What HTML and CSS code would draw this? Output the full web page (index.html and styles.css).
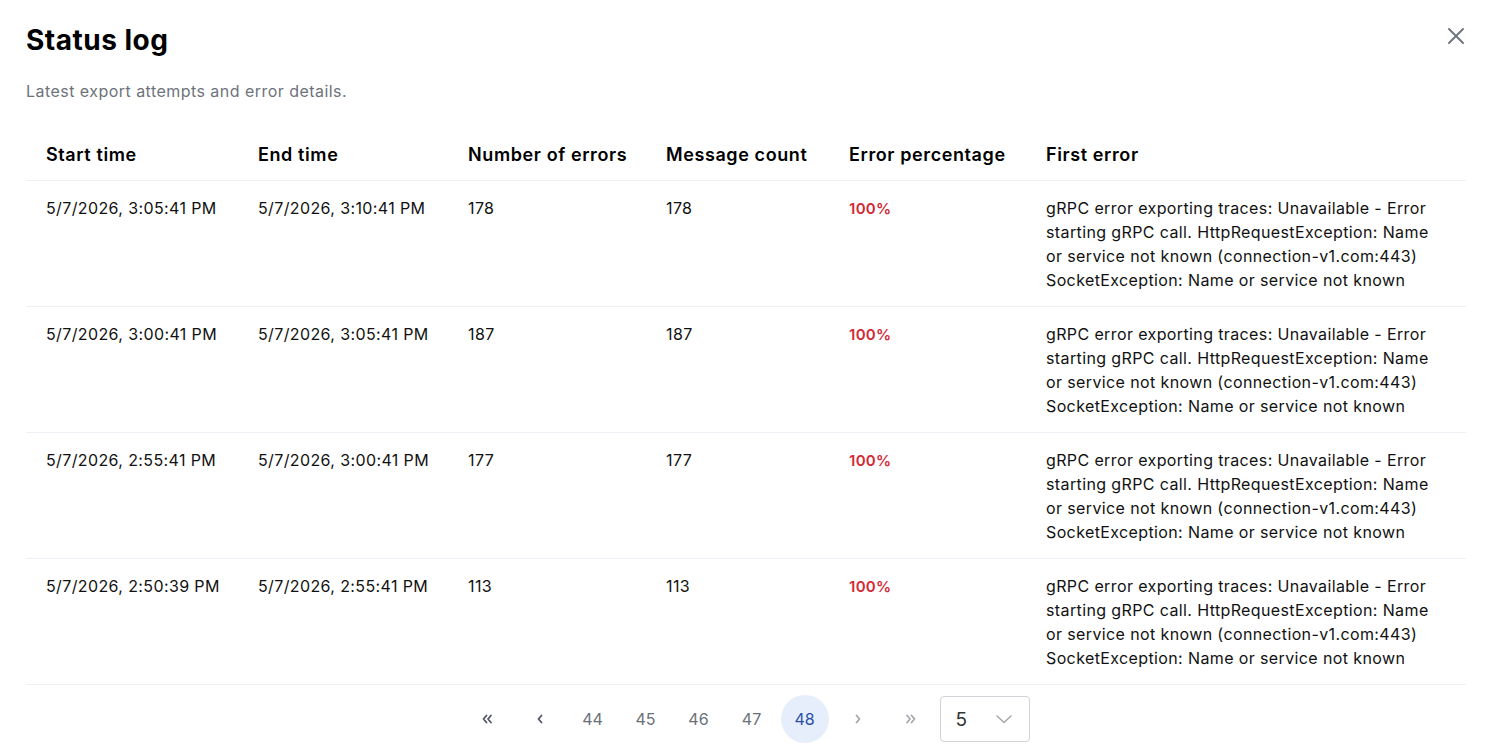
FILE: index.html
```html
<!DOCTYPE html>
<html lang="en">
<head>
    <meta charset="UTF-8">
    <meta name="viewport" content="width=device-width, initial-scale=1.0">
    <title>Status log</title>
    <link rel="stylesheet" href="styles.css">
</head>
<body>
    <div class="dialog">
        <div class="dialog-head">
            <h1>Status log</h1>
            <button class="close" aria-label="Close">
                <svg width="20" height="20" viewBox="0 0 20 20" fill="none" stroke="currentColor" stroke-width="2" stroke-linecap="round">
                    <path d="M3 3L17 17M17 3L3 17"/>
                </svg>
            </button>
        </div>
        <p class="subtitle">Latest export attempts and error details.</p>

        <table class="log">
            <colgroup>
                <col style="width: 212px">
                <col style="width: 210px">
                <col style="width: 198px">
                <col style="width: 183px">
                <col style="width: 197px">
                <col>
            </colgroup>
            <thead>
                <tr>
                    <th>Start time</th>
                    <th>End time</th>
                    <th>Number of errors</th>
                    <th>Message count</th>
                    <th>Error percentage</th>
                    <th>First error</th>
                </tr>
            </thead>
            <tbody id="log"></tbody>
        </table>

        <div class="pager">
            <button class="page-btn icon">
                <svg width="16" height="16" viewBox="0 0 16 16" fill="none" stroke="currentColor" stroke-width="1.8" stroke-linecap="round" stroke-linejoin="round"><path d="M7.5 4.5L4.5 8L7.5 11.5M12 4.5L9 8L12 11.5"/></svg>
            </button>
            <button class="page-btn icon">
                <svg width="16" height="16" viewBox="0 0 16 16" fill="none" stroke="currentColor" stroke-width="1.8" stroke-linecap="round" stroke-linejoin="round"><path d="M9.5 4.5L6.5 8L9.5 11.5"/></svg>
            </button>
            <button class="page-btn">44</button>
            <button class="page-btn">45</button>
            <button class="page-btn">46</button>
            <button class="page-btn">47</button>
            <button class="page-btn active">48</button>
            <button class="page-btn icon disabled">
                <svg width="16" height="16" viewBox="0 0 16 16" fill="none" stroke="currentColor" stroke-width="1.8" stroke-linecap="round" stroke-linejoin="round"><path d="M6.5 4.5L9.5 8L6.5 11.5"/></svg>
            </button>
            <button class="page-btn icon disabled">
                <svg width="16" height="16" viewBox="0 0 16 16" fill="none" stroke="currentColor" stroke-width="1.8" stroke-linecap="round" stroke-linejoin="round"><path d="M4 4.5L7 8L4 11.5M8.5 4.5L11.5 8L8.5 11.5"/></svg>
            </button>
            <div class="page-size">
                <span>5</span>
                <svg width="18" height="18" viewBox="0 0 18 18" fill="none" stroke="currentColor" stroke-width="1.6" stroke-linecap="round" stroke-linejoin="round"><path d="M2 6L9 12.5L16 6"/></svg>
            </div>
        </div>
    </div>

    <script>
        const firstError = 'gRPC error exporting traces: Unavailable - Error starting gRPC call. HttpRequestException: Name or service not known (connection-v1.com:443) SocketException: Name or service not known';

        const entries = [
            { start: '5/7/2026, 3:05:41 PM', end: '5/7/2026, 3:10:41 PM', errors: 178, messages: 178 },
            { start: '5/7/2026, 3:00:41 PM', end: '5/7/2026, 3:05:41 PM', errors: 187, messages: 187 },
            { start: '5/7/2026, 2:55:41 PM', end: '5/7/2026, 3:00:41 PM', errors: 177, messages: 177 },
            { start: '5/7/2026, 2:50:39 PM', end: '5/7/2026, 2:55:41 PM', errors: 113, messages: 113 }
        ];

        const log = document.getElementById('log');
        entries.forEach(entry => {
            const row = document.createElement('tr');
            const pct = Math.round(entry.errors / entry.messages * 100);
            row.innerHTML =
                '<td class="nowrap">' + entry.start + '</td>' +
                '<td class="nowrap">' + entry.end + '</td>' +
                '<td>' + entry.errors + '</td>' +
                '<td>' + entry.messages + '</td>' +
                '<td><span class="pct">' + pct + '%</span></td>' +
                '<td class="error-text">' + firstError + '</td>';
            log.appendChild(row);
        });
    </script>
</body>
</html>
```

FILE: styles.css
```css
body {
    margin: 0;
    font-family: Inter, "Noto Sans", sans-serif;
    letter-spacing: 0.38px;
    color: #111;
    background: #fff;
}
.dialog {
    padding: 22px 22px 0 26px;
}
.dialog-head {
    display: flex;
    justify-content: space-between;
    align-items: flex-start;
}
h1 {
    margin: 0;
    font-size: 28px;
    line-height: 36px;
    font-weight: 700;
    letter-spacing: 0.5px;
    color: #000;
}
.close {
    border: none;
    background: none;
    padding: 0;
    margin: 4px 0 0 0;
    color: #707780;
    cursor: pointer;
}
.subtitle {
    margin: 21px 0 0;
    font-size: 16px;
    line-height: 24px;
    letter-spacing: 0.46px;
    color: #6e737b;
}
.log {
    width: 100%;
    margin-top: 27px;
    border-collapse: collapse;
    table-layout: fixed;
}
th, td {
    text-align: left;
    vertical-align: top;
    padding: 15px 4px 14px 20px;
    border-bottom: 1px solid #eef0f5;
}
th {
    padding: 12px 0 12px 20px;
    font-size: 18px;
    line-height: 26px;
    font-weight: 600;
    letter-spacing: 0.6px;
    white-space: nowrap;
    color: #000;
}
td {
    font-size: 16px;
    line-height: 24px;
    color: #111;
}
.nowrap {
    white-space: nowrap;
}
.pct {
    display: inline-block;
    margin-top: -2px;
    font-size: 15px;
    line-height: 20px;
    font-weight: 600;
    letter-spacing: 0.3px;
    color: #d32a36;
}
.error-text {
    padding-right: 20px;
}
.pager {
    display: flex;
    justify-content: center;
    align-items: center;
    gap: 5px;
    margin-top: 10px;
}
.page-btn {
    width: 48px;
    height: 48px;
    border: none;
    border-radius: 50%;
    background: none;
    font-family: Inter, "Noto Sans", sans-serif;
    font-size: 16px;
    color: #6b7078;
    display: flex;
    align-items: center;
    justify-content: center;
    cursor: pointer;
}
.page-btn.icon {
    color: #4f5566;
}
.page-btn.disabled {
    color: #a4a8ae;
}
.page-btn.active {
    background: #e6eefc;
    color: #2a4ea8;
}
.page-size {
    width: 90px;
    height: 46px;
    box-sizing: border-box;
    border: 1px solid #cfd2d6;
    border-radius: 4px;
    display: flex;
    align-items: center;
    justify-content: space-between;
    padding: 0 16px 0 15px;
    font-size: 19px;
    color: #333;
}
.page-size svg {
    color: #a4a8ae;
}
```
